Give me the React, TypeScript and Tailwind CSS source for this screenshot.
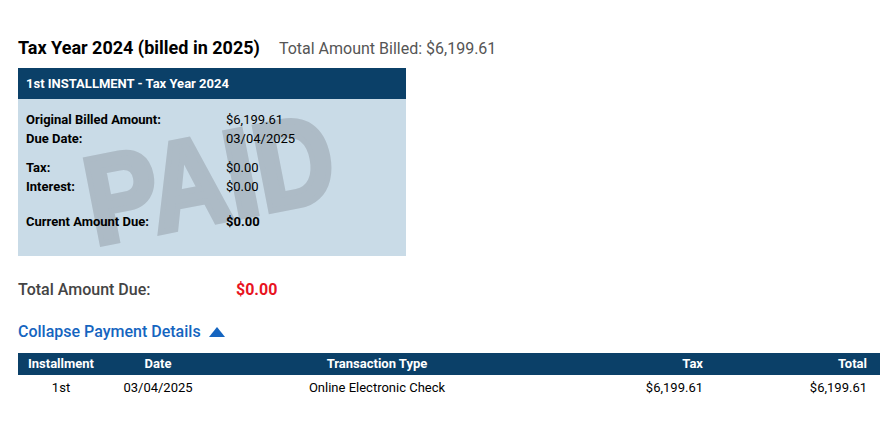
export default function App() {
  const rows = [
    { label: "Original Billed Amount:", value: "$6,199.61" },
    { label: "Due Date:", value: "03/04/2025" },
  ];
  const rows2 = [
    { label: "Tax:", value: "$0.00" },
    { label: "Interest:", value: "$0.00" },
  ];

  return (
    <div className="min-h-screen bg-white font-['Roboto',sans-serif] text-black px-[18px] pt-[37px]">
      {/* Heading */}
      <div className="flex items-baseline">
        <h1 className="text-[18px] font-bold leading-[22px]">Tax Year 2024 (billed in 2025)</h1>
        <span className="ml-[19px] text-[16px] text-[#555]">Total Amount Billed: $6,199.61</span>
      </div>

      {/* Installment card */}
      <div className="mt-[7px] w-[388px]">
        <div className="h-[31px] bg-[#0b4068] px-[8px] flex items-center text-white text-[13px] font-bold">
          1st INSTALLMENT - Tax Year 2024
        </div>
        <div className="relative overflow-hidden bg-[#c9dbe7] h-[157px] px-[8px] pt-[11px] text-[13px]">
          {/* PAID watermark */}
          <div className="absolute left-[57px] top-[43px] origin-top-left rotate-[-11deg] scale-x-[0.87] font-['Liberation_Sans',sans-serif] font-bold text-[124px] leading-none text-[#adbbc6] [-webkit-text-stroke:6px_#adbbc6] select-none">
            PAID
          </div>
          <div className="relative">
            {rows.map((r) => (
              <div key={r.label} className="flex h-[19px] items-center">
                <span className="w-[200px] font-bold">{r.label}</span>
                <span>{r.value}</span>
              </div>
            ))}
            <div className="h-[10px]" />
            {rows2.map((r) => (
              <div key={r.label} className="flex h-[19px] items-center">
                <span className="w-[200px] font-bold">{r.label}</span>
                <span>{r.value}</span>
              </div>
            ))}
            <div className="h-[16px]" />
            <div className="flex h-[19px] items-center font-bold">
              <span className="w-[200px]">Current Amount Due:</span>
              <span>$0.00</span>
            </div>
          </div>
        </div>
      </div>

      {/* Total due */}
      <div className="mt-[22px] flex items-center text-[16px] font-medium">
        <span className="w-[218px] text-[#444]">Total Amount Due:</span>
        <span className="font-bold text-[#e8141f]">$0.00</span>
      </div>

      {/* Collapse link */}
      <button type="button" className="mt-[18px] flex items-center gap-[8px] text-[16px] font-medium text-[#1565c0]">
        Collapse Payment Details
        <svg width="16" height="10" viewBox="0 0 16 10" className="fill-[#1565c0]">
          <path d="M8 0 L16 10 L0 10 Z" />
        </svg>
      </button>

      {/* Payment table */}
      <table className="mt-[9px] w-[862px] text-[13px] border-collapse">
        <thead>
          <tr className="bg-[#0b4068] text-white h-[22px]">
            <th className="w-[86px] text-center font-bold">Installment</th>
            <th className="w-[108px] text-center font-bold">Date</th>
            <th className="w-[330px] text-center font-bold">Transaction Type</th>
            <th className="text-right font-bold pr-[2px]">Tax</th>
            <th className="w-[175px] text-right font-bold pr-[13px]">Total</th>
          </tr>
        </thead>
        <tbody>
          <tr className="h-[26px]">
            <td className="text-center">1st</td>
            <td className="text-center">03/04/2025</td>
            <td className="text-center">Online Electronic Check</td>
            <td className="text-right pr-[2px]">$6,199.61</td>
            <td className="text-right pr-[13px]">$6,199.61</td>
          </tr>
        </tbody>
      </table>
    </div>
  );
}
